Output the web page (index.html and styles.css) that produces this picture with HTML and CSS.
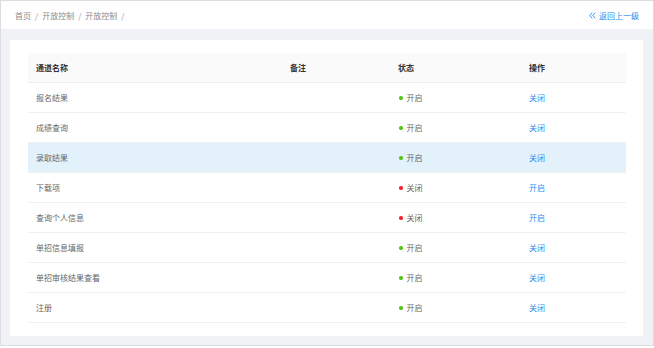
FILE: index.html
```html
<!DOCTYPE html>
<html lang="zh">
<head>
<meta charset="utf-8">
<link rel="stylesheet" href="styles.css">
</head>
<body>
<div class="frame">
  <header class="topbar">
    <nav class="crumbs">
      <span>首页</span><span class="sep">/</span><span>开放控制</span><span class="sep">/</span><span>开放控制</span><span class="sep">/</span>
    </nav>
    <a class="back"><svg class="chev" width="7" height="7" viewBox="0 0 7 7"><polyline points="3.2,0.6 0.8,3.5 3.2,6.4" fill="none" stroke="#2d8cf0" stroke-width="0.9"/><polyline points="6.2,0.6 3.8,3.5 6.2,6.4" fill="none" stroke="#2d8cf0" stroke-width="0.9"/></svg>返回上一级</a>
  </header>
  <main class="content">
    <section class="card">
      <table class="tbl">
        <colgroup>
          <col class="c1"><col class="c2"><col class="c3"><col class="c4">
        </colgroup>
        <thead>
          <tr><th>通道名称</th><th>备注</th><th>状态</th><th>操作</th></tr>
        </thead>
        <tbody>
          <tr><td>报名结果</td><td></td><td><i class="dot on"></i>开启</td><td><a class="op">关闭</a></td></tr>
          <tr><td>成绩查询</td><td></td><td><i class="dot on"></i>开启</td><td><a class="op">关闭</a></td></tr>
          <tr class="hl"><td>录取结果</td><td></td><td><i class="dot on"></i>开启</td><td><a class="op">关闭</a></td></tr>
          <tr><td>下载项</td><td></td><td><i class="dot off"></i>关闭</td><td><a class="op">开启</a></td></tr>
          <tr><td>查询个人信息</td><td></td><td><i class="dot off"></i>关闭</td><td><a class="op">开启</a></td></tr>
          <tr><td>单招信息填报</td><td></td><td><i class="dot on"></i>开启</td><td><a class="op">关闭</a></td></tr>
          <tr><td>单招审核结果查看</td><td></td><td><i class="dot on"></i>开启</td><td><a class="op">关闭</a></td></tr>
          <tr><td>注册</td><td></td><td><i class="dot on"></i>开启</td><td><a class="op">关闭</a></td></tr>
        </tbody>
      </table>
    </section>
  </main>
</div>
</body>
</html>
```
FILE: styles.css
```css
* { box-sizing: border-box; }
html, body { margin: 0; padding: 0; background: #fff; }
body {
  font-family: "Noto Sans CJK SC", "Noto Sans", sans-serif;
  font-size: 8px;
  color: #666;
}
.frame {
  width: 654px;
  height: 346px;
  border: 1px solid #dcdde0;
  display: flex;
  flex-direction: column;
  background: #f0f2f5;
}
.topbar {
  height: 28px;
  flex: none;
  background: #fff;
  display: flex;
  align-items: center;
  justify-content: space-between;
  padding: 0 14px 0 14px;
}
.crumbs { color: #8c8c8c; display: flex; align-items: center; }
.crumbs .sep { margin: 0 4px; color: #999; }
.back { color: #2d8cf0; display: flex; align-items: center; }
.back .chev { margin-right: 3px; }
.content {
  flex: 1;
  padding: 11px 10px 9px 9px;
  display: flex;
}
.card {
  flex: 1;
  background: #fff;
  padding: 13px 17px 13px 18px;
}
.tbl {
  width: 100%;
  border-collapse: collapse;
  table-layout: fixed;
}
.c1 { width: 254px; }
.c2 { width: 108px; }
.c3 { width: 131px; }
.c4 { width: auto; }
.tbl th {
  background: #fafafa;
  color: #333;
  font-weight: 700;
  text-align: left;
  height: 29px;
  padding: 0 8px;
  border-bottom: 1px solid #eeeeee;
}
.tbl td {
  height: 30px;
  padding: 0 8px;
  border-bottom: 1px solid #f0f0f0;
  color: #666;
}
.tbl tr.hl td { background: #e3f1fb; }
.dot {
  display: inline-block;
  width: 3.5px;
  height: 3.5px;
  border-radius: 50%;
  margin: 0 4px 1px 1px;
  vertical-align: middle;
}
.dot.on { background: #52c41a; }
.dot.off { background: #f5222d; }
.op { color: #2d8cf0; }
```
